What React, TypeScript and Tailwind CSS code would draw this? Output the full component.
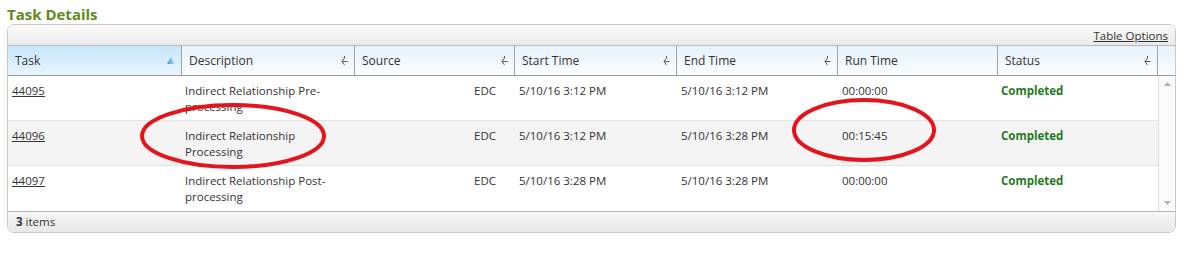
import React from "react";

type Row = {
  id: string;
  desc: [string, string];
  source: string;
  start: string;
  end: string;
  run: string;
  status: string;
};

const rows: Row[] = [
  {
    id: "44095",
    desc: ["Indirect Relationship Pre-", "processing"],
    source: "EDC",
    start: "5/10/16 3:12 PM",
    end: "5/10/16 3:12 PM",
    run: "00:00:00",
    status: "Completed",
  },
  {
    id: "44096",
    desc: ["Indirect Relationship", "Processing"],
    source: "EDC",
    start: "5/10/16 3:12 PM",
    end: "5/10/16 3:28 PM",
    run: "00:15:45",
    status: "Completed",
  },
  {
    id: "44097",
    desc: ["Indirect Relationship Post-", "processing"],
    source: "EDC",
    start: "5/10/16 3:28 PM",
    end: "5/10/16 3:28 PM",
    run: "00:00:00",
    status: "Completed",
  },
];

const FilterIcon = () => (
  <svg width="7" height="12" viewBox="0 0 7 12" className="shrink-0">
    <path d="M3.5 1 V3 L1 6.5 L3.5 10 M1 6.5 H6.5" stroke="#5a5a5a" strokeWidth="1" fill="none" />
  </svg>
);

const SortIcon = () => (
  <svg width="8" height="7" viewBox="0 0 8 7" className="shrink-0">
    <defs>
      <linearGradient id="sortg" x1="0" y1="0" x2="1" y2="0">
        <stop offset="0" stopColor="#3a8fd0" />
        <stop offset="1" stopColor="#b9e6fb" />
      </linearGradient>
    </defs>
    <path d="M4 0 L8 7 L0 7 Z" fill="url(#sortg)" />
  </svg>
);

const HeaderCell = ({
  label,
  className,
  icon,
}: {
  label: string;
  className: string;
  icon?: "sort" | "filter";
}) => (
  <div
    className={`flex h-full items-center justify-between border-r border-[#a3a3a3] pl-[7px] pr-[6px] ${className}`}
  >
    <span>{label}</span>
    {icon === "sort" && <SortIcon />}
    {icon === "filter" && <FilterIcon />}
  </div>
);

export default function App() {
  return (
    <div
      className="relative h-[260px] w-[1185px] bg-white text-[#333]"
      style={{ fontFamily: '"Open Sans", "Noto Sans", Arial, sans-serif' }}
    >
      <div className="h-[24px] pl-[7px] pt-[4px] text-[15px] font-bold leading-[20px] text-[#5f8a1c]">
        Task Details
      </div>

      <div className="ml-[7px] w-[1169px] overflow-hidden rounded-[7px] border border-[#c9c9c9]">
        {/* toolbar */}
        <div className="flex h-[21px] items-end justify-end border-b border-[#b9b9b9] bg-gradient-to-b from-[#fbfbfb] to-[#e9e9e9] pb-[1px] pr-[7px]">
          <a className="text-[11.5px] leading-[16px] text-[#333] underline">Table Options</a>
        </div>

        {/* header */}
        <div className="flex h-[30px] border-b border-[#9b9b9b] text-[12px]">
          <HeaderCell
            label="Task"
            icon="sort"
            className="w-[174px] bg-gradient-to-b from-[#c6e6fb] to-[#e8f5fe]"
          />
          <HeaderCell
            label="Description"
            icon="filter"
            className="w-[173px] bg-gradient-to-b from-[#e7f2fc] to-[#fafdff]"
          />
          <HeaderCell
            label="Source"
            icon="filter"
            className="w-[160px] bg-gradient-to-b from-[#e7f2fc] to-[#fafdff]"
          />
          <HeaderCell
            label="Start Time"
            icon="filter"
            className="w-[162px] bg-gradient-to-b from-[#e7f2fc] to-[#fafdff]"
          />
          <HeaderCell
            label="End Time"
            icon="filter"
            className="w-[161px] bg-gradient-to-b from-[#e7f2fc] to-[#fafdff]"
          />
          <HeaderCell
            label="Run Time"
            className="w-[160px] bg-gradient-to-b from-[#e7f2fc] to-[#fafdff]"
          />
          <HeaderCell
            label="Status"
            icon="filter"
            className="w-[160px] bg-gradient-to-b from-[#e7f2fc] to-[#fafdff]"
          />
          <div className="w-[17px] bg-gradient-to-b from-[#e7f2fc] to-[#fafdff]" />
        </div>

        {/* body */}
        <div className="flex">
          <div className="w-[1150px] text-[11.5px] leading-[16px]">
            {rows.map((r, i) => (
              <div
                key={r.id}
                className={`flex h-[45px] pt-[7px] ${i < rows.length - 1 ? "border-b border-[#e4e4e4]" : ""} ${
                  i === 1 ? "bg-[#f4f4f4]" : "bg-white"
                }`}
              >
                <div className="w-[174px] pl-[4px]">
                  <a className="text-[#333] underline">{r.id}</a>
                </div>
                <div className="w-[173px] pl-[3px]">
                  {r.desc[0]}
                  <br />
                  {r.desc[1]}
                </div>
                <div className="w-[160px] pr-[19px] text-right">{r.source}</div>
                <div className="w-[162px] pl-[4px]">{r.start}</div>
                <div className="w-[161px] pl-[4px]">{r.end}</div>
                <div className="w-[160px] pl-[4px]">{r.run}</div>
                <div className="w-[160px] pl-[3px] font-bold text-[#1f7a1f]">{r.status}</div>
              </div>
            ))}
          </div>
          {/* scrollbar */}
          <div className="flex w-[17px] flex-col items-center justify-between border-l border-[#dedede] bg-[#fafafa] py-[6px]">
            <svg width="7" height="4" viewBox="0 0 7 4">
              <path d="M3.5 0 L7 4 L0 4 Z" fill="#b0b0b0" />
            </svg>
            <svg width="7" height="4" viewBox="0 0 7 4">
              <path d="M0 0 L7 0 L3.5 4 Z" fill="#b0b0b0" />
            </svg>
          </div>
        </div>

        {/* footer */}
        <div className="flex h-[21px] items-center border-t border-[#b5b5b5] bg-gradient-to-b from-[#f6f6f6] to-[#e8e8e8] pl-[8px] text-[11.5px]">
          <span className="font-bold">3</span>
          <span>&nbsp;items</span>
        </div>
      </div>

      {/* red annotation ellipses */}
      <svg
        className="pointer-events-none absolute left-0 top-0"
        width="1185"
        height="260"
        viewBox="0 0 1185 260"
      >
        <ellipse cx="233" cy="136" rx="91" ry="31" fill="none" stroke="#e5141c" strokeWidth="4" />
        <ellipse cx="864" cy="130" rx="70" ry="30" fill="none" stroke="#e5141c" strokeWidth="4" />
      </svg>
    </div>
  );
}
